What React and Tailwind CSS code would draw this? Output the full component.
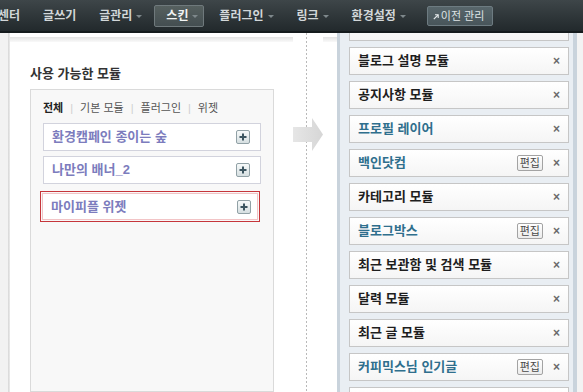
import React from "react";

const FONT = "font-['Liberation_Sans','Noto_Sans_CJK_KR',sans-serif]";

function Caret() {
  return (
    <span className="ml-[4px] mt-[1px] inline-block h-0 w-0 border-x-[3px] border-t-[3px] border-x-transparent border-t-[#7e888b]" />
  );
}

function PlusBtn() {
  return (
    <span className="flex h-[14px] w-[14px] shrink-0 items-center justify-center rounded-[2px] border border-[#91a1a6] bg-gradient-to-b from-[#f7fafa] to-[#d6dfe1]">
      <svg width="8" height="8" viewBox="0 0 8 8">
        <rect x="3" y="0.5" width="2" height="7" fill="#3c5560" />
        <rect x="0.5" y="3" width="7" height="2" fill="#3c5560" />
      </svg>
    </span>
  );
}

function LeftItem({ children }) {
  return (
    <div className="flex h-[28px] shrink-0 items-center border border-[#d2d3dd] bg-white pl-[8px] pr-[10px]">
      <span className="flex-1 text-[13px] font-bold leading-[16px] text-[#7c7cbd]">{children}</span>
      <PlusBtn />
    </div>
  );
}

function RightItem({ t, teal, edit }) {
  return (
    <div className="flex h-[28px] shrink-0 items-center border border-[#c6c6c6] bg-gradient-to-b from-white to-[#f5f5f5] pl-[8px] pr-[8px]">
      <span
        className={
          "flex-1 text-[13px] font-bold leading-[16px] " +
          (teal ? "text-[#2f6f8d]" : "text-[#1e1e1e]")
        }
      >
        {t}
      </span>
      {edit && (
        <span className="mr-[10px] flex h-[16px] items-center rounded-[2px] border border-[#a3a3a3] bg-gradient-to-b from-white to-[#ececec] px-[2px] text-[11px] leading-[14px] text-[#4a4a4a]">
          편집
        </span>
      )}
      {t && <span className="font-['Liberation_Sans',sans-serif] text-[12px] font-bold leading-[14px] text-[#6a6a6a]">×</span>}
    </div>
  );
}

const rightItems = [
  { t: "" },
  { t: "블로그 설명 모듈" },
  { t: "공지사항 모듈" },
  { t: "프로필 레이어", teal: true },
  { t: "백인닷컴", teal: true, edit: true },
  { t: "카테고리 모듈" },
  { t: "블로그박스", teal: true, edit: true },
  { t: "최근 보관함 및 검색 모듈" },
  { t: "달력 모듈" },
  { t: "최근 글 모듈" },
  { t: "커피믹스님 인기글", teal: true, edit: true },
  { t: "" },
];

export default function App() {
  return (
    <div className={"flex h-[392px] w-[583px] flex-col overflow-hidden bg-white " + FONT}>
      {/* top nav */}
      <div className="relative z-10 flex h-[33px] shrink-0 items-center whitespace-nowrap border-b-[2px] border-[#151b1d] bg-gradient-to-b from-[#3e4649] to-[#22292c] text-[12px] font-bold leading-[16px] text-[#d2d7d9]">
        <span className="ml-[-2px]">센터</span>
        <span className="ml-[23px]">글쓰기</span>
        <span className="ml-[23px] flex items-center">
          글관리
          <Caret />
        </span>
        <span className="ml-[12px] flex h-[22px] w-[50px] items-center rounded-[2px] border border-[#6f797c] bg-gradient-to-b from-[#56605f] to-[#444e51] pl-[11px] text-[#f2f4f4]">
          스킨
          <Caret />
        </span>
        <span className="ml-[15px] flex items-center">
          플러그인
          <Caret />
        </span>
        <span className="ml-[23px] flex items-center">
          링크
          <Caret />
        </span>
        <span className="ml-[23px] flex items-center">
          환경설정
          <Caret />
        </span>
        <span className="ml-[21px] flex h-[20px] w-[66px] items-center rounded-[2px] border border-[#6d7b81] bg-gradient-to-b from-[#58666b] to-[#48555a] pl-[5px] text-[11px] font-normal text-[#dfe4e6]">
          <svg width="6" height="6" viewBox="0 0 6 6" className="mr-[2px] mt-[2px]">
            <path d="M0.8 5.2 L5 1" stroke="#e6eaec" strokeWidth="1.1" />
            <path d="M2 0.8 H5.2 V4" stroke="#e6eaec" strokeWidth="1.1" fill="none" />
          </svg>
          이전 관리
        </span>
      </div>

      {/* body */}
      <div className="relative flex min-h-0 flex-1">
        <div className="w-[8px] shrink-0 bg-[#f2f2f2]" />
        <div className="w-[2px] shrink-0 bg-gradient-to-r from-[#d6d6d6] to-[#ececec]" />

        {/* left main */}
        <div className="flex w-[296px] shrink-0 flex-col">
          <div className="mt-[4px] h-[5px] w-[283px] bg-gradient-to-b from-[#e3e3e3] to-[#f9f9f9]" />
          <div className="ml-[20px] mt-[24px] text-[13px] font-bold leading-[16px] text-[#333]">
            사용 가능한 모듈
          </div>
          <div className="ml-[20px] mt-[7px] flex w-[244px] flex-1 flex-col border border-[#dadada] bg-[#f8f8f8] px-[12px] pt-[10px]">
            <div className="flex h-[16px] items-center gap-[7px] text-[11px] leading-[16px] text-[#555]">
              <span className="font-bold text-[#222]">전체</span>
              <span className="text-[#cfcfcf]">|</span>
              <span>기본 모듈</span>
              <span className="text-[#cfcfcf]">|</span>
              <span>플러그인</span>
              <span className="text-[#cfcfcf]">|</span>
              <span>위젯</span>
            </div>
            <div className="mt-[7px] flex flex-col">
              <LeftItem>환경캠페인 종이는 숲</LeftItem>
              <div className="mt-[5px]">
                <LeftItem>나만의 배너_2</LeftItem>
              </div>
              <div className="ml-[-3px] mr-[1px] mt-[7px] h-[31px] border border-[#c6363b] p-[1px]">
                <div className="flex h-full items-center border border-[#f2c4c6] bg-white pl-[8px] pr-[6px]">
                  <span className="flex-1 text-[13px] font-bold leading-[16px] text-[#7c7cbd]">마이피플 위젯</span>
                  <PlusBtn />
                </div>
              </div>
            </div>
          </div>
        </div>

        {/* dotted line */}
        <div className="w-[1px] shrink-0 bg-[repeating-linear-gradient(to_bottom,#b9b9b9_0px,#b9b9b9_2px,transparent_2px,transparent_4px)]" />
        <div className="w-[30px] shrink-0">
          <div className="ml-[16px] mt-[4px] h-[5px] w-[14px] bg-gradient-to-b from-[#e3e3e3] to-[#f9f9f9]" />
        </div>

        {/* right column */}
        <div className="flex w-[240px] shrink-0 overflow-hidden border-l-[3px] border-r-[4px] border-[#c9d3dc] bg-[#e9eef3]">
          <div className="ml-[9px] mt-[-20px] flex w-[220px] flex-col gap-[6px]">
            {rightItems.map((it, i) => (
              <RightItem key={i} {...it} />
            ))}
          </div>
        </div>
        <div className="flex-1 bg-[#f3f3f3]" />

        {/* move arrow */}
        <svg className="absolute left-[293px] top-[85px]" width="31" height="34" viewBox="0 0 31 34">
          <defs>
            <linearGradient id="ag" x1="0" y1="0" x2="1" y2="0">
              <stop offset="0" stopColor="#e6e6e6" />
              <stop offset="1" stopColor="#d6d6d6" />
            </linearGradient>
          </defs>
          <polygon points="0,9 19,9 19,0 30,16.5 19,33 19,24 0,24" fill="url(#ag)" />
        </svg>
      </div>
    </div>
  );
}
